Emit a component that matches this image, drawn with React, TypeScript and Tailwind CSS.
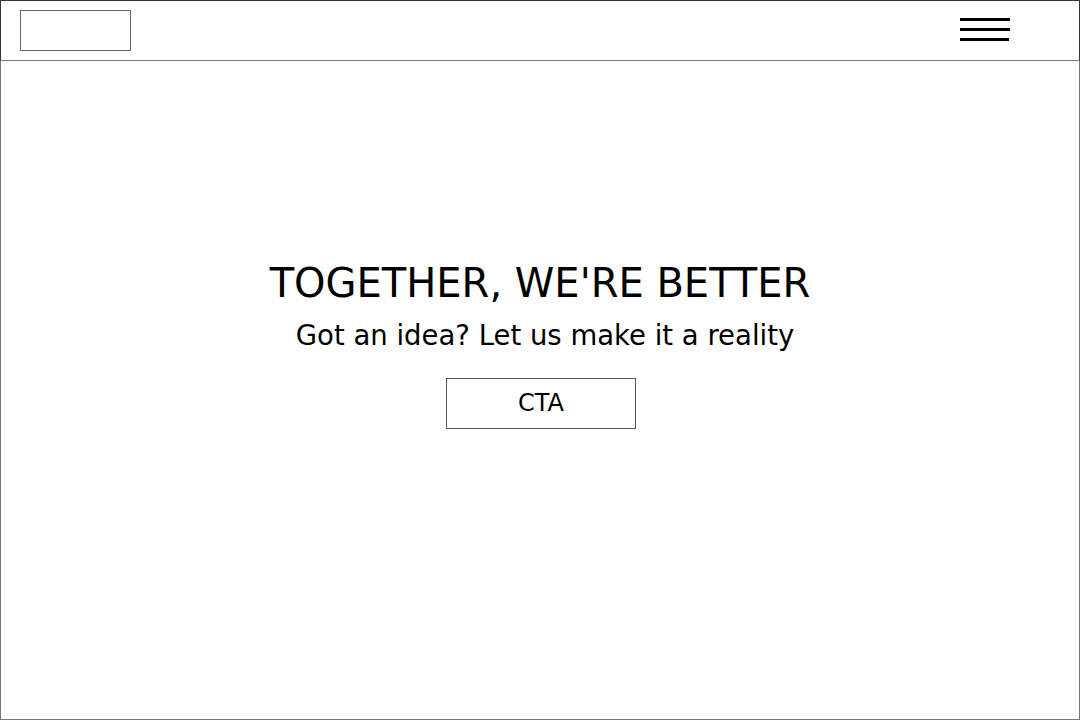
const MenuIcon = () => (
  <div className="flex flex-col gap-[7px] w-[50px]">
    <span className="block h-[3px] w-[50px] bg-black" />
    <span className="block h-[3px] w-[50px] bg-black" />
    <span className="block h-[3px] w-[49px] bg-black" />
  </div>
);

const App = () => {
  return (
    <div className="w-[1080px] h-[720px] bg-white font-['DejaVu_Sans',sans-serif] text-black">
      <header className="h-[61px] border-x border-t border-[#333] border-b border-b-[#777] flex items-start justify-between pl-[19px] pr-[69px]">
        <div className="mt-[9px] w-[111px] h-[41px] border border-[#666]" />
        <div className="mt-[17px]">
          <MenuIcon />
        </div>
      </header>
      <main className="h-[659px] border-x border-b border-[#777] flex flex-col items-center pt-[202px]">
        <h1 className="text-[40px] leading-none">TOGETHER, WE'RE BETTER</h1>
        <p className="mt-[19px] ml-[10px] text-[27.5px] leading-none">
          Got an idea? Let us make it a reality
        </p>
        <button className="mt-[28px] ml-[2px] w-[190px] h-[51px] border border-[#555] text-[24px] leading-none flex items-center justify-center">
          CTA
        </button>
      </main>
    </div>
  );
};

export default App;
